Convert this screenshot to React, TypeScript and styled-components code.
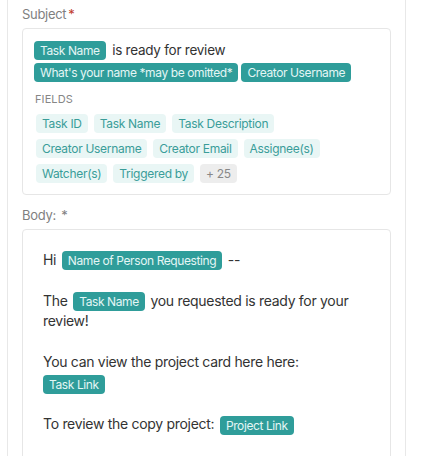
import React from "react";
import styled, { createGlobalStyle } from "styled-components";

const Global = createGlobalStyle`
  html, body { margin: 0; padding: 0; background: #ffffff; }
  body { font-family: Inter, "Noto Sans", sans-serif; color: #333333; }
`;

const Panel = styled.div`
  margin-left: 7px;
  width: 369px;
  min-height: 456px;
  box-sizing: content-box;
  padding: 5px 14px 0;
  border-left: 1px solid #e8e8e8;
  border-right: 1px solid #e8e8e8;
`;

const Label = styled.div<{ $top?: number }>`
  margin-top: ${(p) => p.$top ?? 0}px;
  height: 18px;
  line-height: 18px;
  font-size: 13px;
  letter-spacing: -0.3px;
  color: #7f7f7f;
  margin-bottom: 5px;
`;

const Req = styled.span<{ $red?: boolean }>`
  color: ${(p) => (p.$red ? "#c0392b" : "#7f7f7f")};
  margin-left: 2px;
`;

const Box = styled.div<{ $pad: string }>`
  border: 1px solid #e6e6e6;
  border-radius: 4px;
  padding: ${(p) => p.$pad};
`;

const SubjectLine = styled.div`
  font-size: 13.5px;
  letter-spacing: -0.25px;
  line-height: 21px;
`;

const Chip = styled.span<{ $variant: "solid" | "light" | "gray" }>`
  display: inline-flex;
  align-items: center;
  height: 19px;
  padding: 0 6px;
  border-radius: 4px;
  font-size: 12px;
  letter-spacing: ${(p) => (p.$variant === "solid" ? "-0.4px" : "-0.3px")};
  line-height: 19px;
  vertical-align: middle;
  white-space: nowrap;
  background: ${(p) =>
    p.$variant === "solid" ? "#2f9d9a" : p.$variant === "light" ? "#e9f6f5" : "#ededed"};
  color: ${(p) =>
    p.$variant === "solid" ? "#e4f6f5" : p.$variant === "light" ? "#3a9d99" : "#888888"};
`;

const InlineChip = styled(Chip)`
  margin: 0 3px 2px 0;
`;

const FieldsTitle = styled.div`
  margin: 8px 0 0 1px;
  font-size: 11px;
  line-height: 14px;
  color: #868686;
  text-transform: uppercase;
  letter-spacing: 0.1px;
`;

const FieldList = styled.div`
  display: flex;
  flex-wrap: wrap;
  gap: 6px;
  margin: 8px 0 0 2px;
`;

const BodyText = styled.div`
  font-size: 14px;
  letter-spacing: -0.3px;
  line-height: 20.5px;
  color: #333333;
`;

const Para = styled.p`
  margin: 0 0 20.5px;
`;

const BodyChip = styled(Chip)<{ $flush?: boolean }>`
  margin: 0 ${(p) => (p.$flush ? "0" : "2px")};
`;

const fields = [
  "Task ID",
  "Task Name",
  "Task Description",
  "Creator Username",
  "Creator Email",
  "Assignee(s)",
  "Watcher(s)",
  "Triggered by",
];

export default function App() {
  return (
    <>
      <Global />
      <Panel>
        <Label>
          Subject<Req $red>*</Req>
        </Label>
        <Box $pad="11px 11px 11px">
          <SubjectLine>
            <InlineChip $variant="solid">Task Name</InlineChip> is ready for review{" "}
            <InlineChip $variant="solid">What's your name *may be omitted*</InlineChip>
            <InlineChip $variant="solid">Creator Username</InlineChip>
          </SubjectLine>
          <FieldsTitle>Fields</FieldsTitle>
          <FieldList>
            {fields.map((f) => (
              <Chip key={f} $variant="light">
                {f}
              </Chip>
            ))}
            <Chip $variant="gray">+ 25</Chip>
          </FieldList>
        </Box>
        <Label $top={11}>
          Body: <Req>*</Req>
        </Label>
        <Box $pad="20px 20px 20px">
          <BodyText>
            <Para>
              Hi <BodyChip $variant="solid">Name of Person Requesting</BodyChip> --
            </Para>
            <Para>
              The <BodyChip $variant="solid">Task Name</BodyChip> you requested is ready for your
              <br />
              review!
            </Para>
            <Para>
              You can view the project card here here:
              <br />
              <BodyChip $variant="solid" $flush>
                Task Link
              </BodyChip>
            </Para>
            <Para>
              To review the copy project: <BodyChip $variant="solid">Project Link</BodyChip>
            </Para>
          </BodyText>
        </Box>
      </Panel>
    </>
  );
}
